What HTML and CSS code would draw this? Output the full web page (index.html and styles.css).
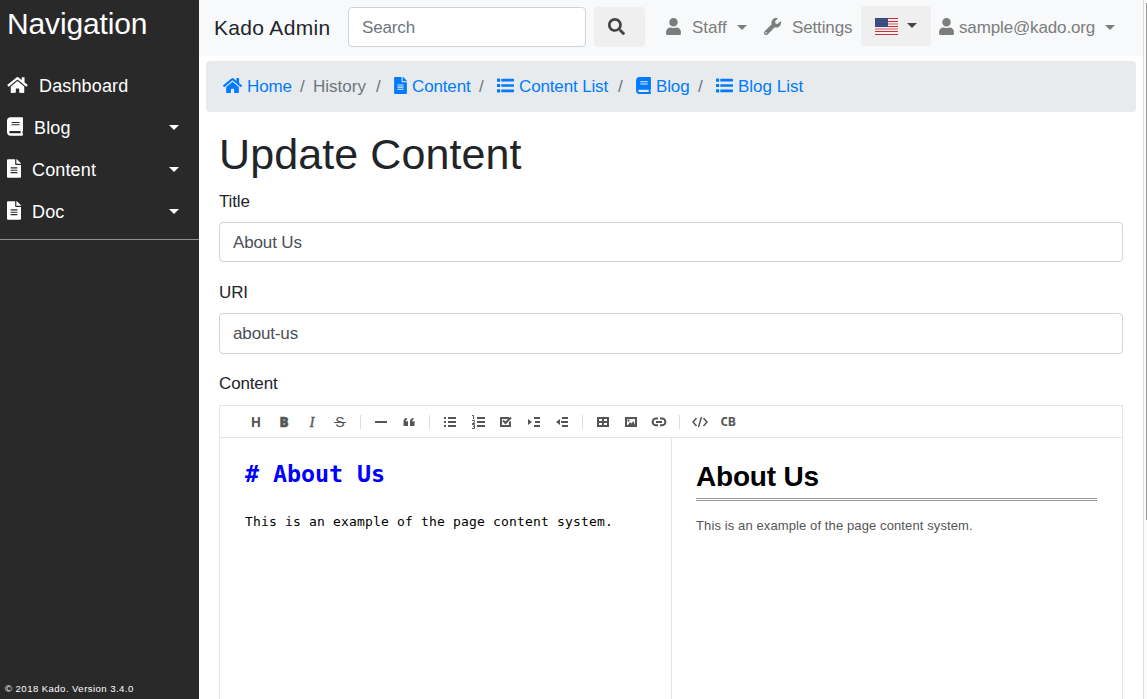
FILE: index.html
```html
<!DOCTYPE html>
<html lang="en">
<head>
<meta charset="utf-8">
<title>Kado Admin</title>
<link rel="stylesheet" href="styles.css">
</head>
<body>
<svg class="defs" width="0" height="0">
  <symbol id="home" viewBox="0 0 576 512"><path d="M280.37 148.26L96 300.11V464a16 16 0 0 0 16 16l112.06-.29a16 16 0 0 0 15.92-16V368a16 16 0 0 1 16-16h64a16 16 0 0 1 16 16v95.64a16 16 0 0 0 16 16.05L464 480a16 16 0 0 0 16-16V300L295.67 148.26a12.19 12.19 0 0 0-15.3 0zM571.6 251.47L488 182.56V44.05a12 12 0 0 0-12-12h-56a12 12 0 0 0-12 12v72.61L318.47 43a48 48 0 0 0-61 0L4.34 251.47a12 12 0 0 0-1.6 16.9l25.5 31A12 12 0 0 0 45.15 301l235.22-193.74a12.19 12.19 0 0 1 15.3 0L530.9 301a12 12 0 0 0 16.9-1.6l25.5-31a12 12 0 0 0-1.7-16.93z"/></symbol>
  <symbol id="book" viewBox="0 0 448 512"><path d="M448 360V24c0-13.3-10.7-24-24-24H96C43 0 0 43 0 96v320c0 53 43 96 96 96h328c13.3 0 24-10.7 24-24v-16c0-7.5-3.5-14.3-8.9-18.7-4.2-15.4-4.2-59.3 0-74.7 5.4-4.3 8.9-11.1 8.9-18.6zM128 134c0-3.3 2.7-6 6-6h212c3.3 0 6 2.7 6 6v20c0 3.3-2.7 6-6 6H134c-3.3 0-6-2.7-6-6v-20zm0 64c0-3.3 2.7-6 6-6h212c3.3 0 6 2.7 6 6v20c0 3.3-2.7 6-6 6H134c-3.3 0-6-2.7-6-6v-20zm253.4 250H96c-17.7 0-32-14.3-32-32 0-17.6 14.4-32 32-32h285.4c-1.9 17.1-1.9 46.9 0 64z"/></symbol>
  <symbol id="file" viewBox="0 0 384 512"><path d="M224 136V0H24C10.7 0 0 10.7 0 24v464c0 13.3 10.7 24 24 24h336c13.3 0 24-10.7 24-24V160H248c-13.2 0-24-10.8-24-24zm64 236c0 6.6-5.4 12-12 12H108c-6.6 0-12-5.4-12-12v-8c0-6.6 5.4-12 12-12h168c6.6 0 12 5.4 12 12v8zm0-64c0 6.6-5.4 12-12 12H108c-6.6 0-12-5.4-12-12v-8c0-6.6 5.4-12 12-12h168c6.6 0 12 5.4 12 12v8zm0-72v8c0 6.6-5.4 12-12 12H108c-6.6 0-12-5.4-12-12v-8c0-6.6 5.4-12 12-12h168c6.6 0 12 5.4 12 12zm96-114.1v6.1H256V0h6.1c6.4 0 12.5 2.5 17 7l97.9 98c4.5 4.5 7 10.6 7 16.9z"/></symbol>
  <symbol id="list" viewBox="0 0 512 512"><path d="M12 48h72a12 12 0 0 1 12 12v72a12 12 0 0 1-12 12H12a12 12 0 0 1-12-12V60a12 12 0 0 1 12-12zm0 160h72a12 12 0 0 1 12 12v72a12 12 0 0 1-12 12H12a12 12 0 0 1-12-12v-72a12 12 0 0 1 12-12zm0 160h72a12 12 0 0 1 12 12v72a12 12 0 0 1-12 12H12a12 12 0 0 1-12-12v-72a12 12 0 0 1 12-12zM144 56h352a16 16 0 0 1 16 16v48a16 16 0 0 1-16 16H144a16 16 0 0 1-16-16V72a16 16 0 0 1 16-16zm0 160h352a16 16 0 0 1 16 16v48a16 16 0 0 1-16 16H144a16 16 0 0 1-16-16v-48a16 16 0 0 1 16-16zm0 160h352a16 16 0 0 1 16 16v48a16 16 0 0 1-16 16H144a16 16 0 0 1-16-16v-48a16 16 0 0 1 16-16z"/></symbol>
  <symbol id="user" viewBox="0 0 448 512"><path d="M224 256c70.7 0 128-57.3 128-128S294.7 0 224 0 96 57.3 96 128s57.3 128 128 128zm89.6 32h-16.7c-22.2 10.2-46.9 16-72.9 16s-50.6-5.8-72.9-16h-16.7C60.2 288 0 348.2 0 422.4V464c0 26.5 21.5 48 48 48h352c26.5 0 48-21.5 48-48v-41.6c0-74.2-60.2-134.4-134.4-134.4z"/></symbol>
  <symbol id="search" viewBox="0 0 512 512"><path d="M505 442.7L405.3 343c-4.5-4.5-10.6-7-17-7H372c27.6-35.3 44-79.7 44-128C416 93.1 322.9 0 208 0S0 93.1 0 208s93.1 208 208 208c48.3 0 92.7-16.4 128-44v16.3c0 6.4 2.5 12.5 7 17l99.7 99.7c9.4 9.4 24.6 9.4 33.9 0l28.3-28.3c9.4-9.4 9.4-24.6.1-34zM208 336c-70.7 0-128-57.2-128-128 0-70.7 57.2-128 128-128 70.7 0 128 57.2 128 128 0 70.7-57.2 128-128 128z"/></symbol>
  <symbol id="wrench" viewBox="0 0 512 512"><path d="M507.73 109.1c-2.24-9.03-13.54-12.09-20.12-5.51l-74.36 74.36-67.88-11.31-11.31-67.88 74.36-74.36c6.62-6.62 3.43-17.9-5.66-20.16-47.38-11.74-99.55.91-136.58 37.93-39.64 39.64-50.55 97.1-34.05 147.2L18.74 402.76c-24.99 24.99-24.99 65.51 0 90.5 24.99 24.99 65.51 24.99 90.5 0l213.21-213.21c50.12 16.71 107.47 5.68 147.37-34.22 37.07-37.07 49.7-89.32 37.91-136.73zM64 472c-13.25 0-24-10.75-24-24 0-13.26 10.75-24 24-24s24 10.74 24 24c0 13.25-10.75 24-24 24z"/></symbol>
</svg>
<div class="app">
  <aside class="sidebar">
    <h2 class="side-title">Navigation</h2>
    <nav class="side-nav">
      <a class="side-link"><svg class="i20"><use href="#home"/></svg><span class="dash">Dashboard</span></a>
      <a class="side-link"><svg class="i16"><use href="#book"/></svg><span>Blog</span><i class="caret"></i></a>
      <a class="side-link"><svg class="i14"><use href="#file"/></svg><span>Content</span><i class="caret"></i></a>
      <a class="side-link"><svg class="i14"><use href="#file"/></svg><span>Doc</span><i class="caret"></i></a>
    </nav>
    <footer class="side-foot">© 2018 Kado. Version 3.4.0</footer>
  </aside>
  <main class="main">
    <header class="navbar">
      <span class="brand">Kado Admin</span>
      <input class="field search" placeholder="Search">
      <button class="search-btn"><svg class="n17"><use href="#search"/></svg></button>
      <a class="top-link staff"><svg class="n15"><use href="#user"/></svg><span>Staff</span><i class="caret"></i></a>
      <a class="top-link settings"><svg class="n17"><use href="#wrench"/></svg><span>Settings</span></a>
      <button class="lang">
        <svg class="flag" viewBox="0 0 23 17"><path fill="#f6eeee" d="M0 0h23v17H0z"/><path stroke="#c0333d" d="M0 .5h23M0 3.500h23M0 8.500h23M0 13.500h23M0 16.500h23"/><path stroke="#e3a3a8" d="M0 5.500h23M0 6.500h23M0 10.500h23M0 11.500h23"/><path fill="#31487a" d="M0 0h13v9H0z"/><path stroke="#5a6f9c" stroke-width=".7" stroke-dasharray="1 1.200" d="M1 1.500h12M2 3h11M1 4.500h12M2 6h11M1 7.500h12"/></svg>
        <i class="caret"></i>
      </button>
      <a class="top-link account"><svg class="n15"><use href="#user"/></svg><span>sample@kado.org</span><i class="caret"></i></a>
    </header>
    <nav class="crumbs">
      <a class="crumb c1"><svg class="b19"><use href="#home"/></svg>Home</a><i class="sep">/</i>
      <span class="crumb c2">History</span><i class="sep">/</i>
      <a class="crumb c3"><svg class="b13"><use href="#file"/></svg>Content</a><i class="sep">/</i>
      <a class="crumb c4"><svg class="n17"><use href="#list"/></svg>Content List</a><i class="sep">/</i>
      <a class="crumb c5"><svg class="n15"><use href="#book"/></svg>Blog</a><i class="sep">/</i>
      <a class="crumb c6"><svg class="n17"><use href="#list"/></svg>Blog List</a>
    </nav>
    <form class="form">
      <h1 class="page-title">Update Content</h1>
      <label class="label">Title</label>
      <input class="field title" value="About Us">
      <label class="label second">URI</label>
      <input class="field uri" value="about-us">
      <label class="label">Content</label>
      <div class="editor">
        <div class="tools">
          <b class="tool">H</b><b class="tool heavy">B</b><i class="tool ital">I</i><span class="tool strike">S</span>
          <i class="bar"></i>
          <svg class="tool"><path d="M8 15h12v2H8z"/></svg>
          <svg class="tool"><path d="M12 12v1.500c-1 .4-1.300 1-1.300 1.800H13V20H8.500v-4.500c0-2 1.200-3.300 3.500-3.500zM18.500 12v1.500c-1 .4-1.300 1-1.300 1.800h2.300V20H15v-4.500c0-2 1.200-3.300 3.500-3.500z"/></svg>
          <i class="bar"></i>
          <svg class="tool"><path d="M8 11h2v2H8zm4 0h8v2h-8zM8 15h2v2H8zm4 0h8v2h-8zM8 19h2v2H8zm4 0h8v2h-8z"/></svg>
          <svg class="tool"><path d="M13 11h8v2h-8zm0 4h8v2h-8zm0 4h8v2h-8z"/><path class="line" d="M8 9.500h1.500V13M8 14.500h2.500v1.300L8.500 17.500H11M8 18.500h2.500v4H8M9 20.500h1.500"/></svg>
          <svg class="tool"><path d="M8 11h9v2h-7v6h7v-3l2-1v6H8z"/><path class="thick" d="M11 14.500l2.500 2.500 5.500-5.500"/></svg>
          <svg class="tool"><path d="M8 13l4 3-4 3zM14 11h6v2h-6zm1 4h5v2h-5zm-1 4h6v2h-6z"/></svg>
          <svg class="tool"><path d="M12 13l-4 3 4 3zM14 11h6v2h-6zm-1 4h7v2h-7zm1 4h6v2h-6z"/></svg>
          <i class="bar"></i>
          <svg class="tool"><path fill-rule="evenodd" d="M8 11h12v10H8zm2 2v2h3v-2zm5 0v2h3v-2zm-5 4v2h3v-2zm5 0v2h3v-2z"/></svg>
          <svg class="tool"><path fill-rule="evenodd" d="M8 11h12v10H8zm2 2v6h8v-6z"/><path d="M11 19l2-3 1.500 1.500L16.500 15l1.500 4zM10.500 13.500h2v2h-2z"/></svg>
          <svg class="tool"><path class="thick" d="M13 12.500h-2a3.300 3.300 0 0 0 0 6.800h2M15 12.500h2a3.300 3.300 0 0 1 0 6.800h-2M11 15.900h6"/></svg>
          <i class="bar"></i>
          <svg class="tool"><path class="code" d="M10.500 12L7 16l3.500 4M17.500 12l3.500 4-3.500 4M15.500 11l-3 10"/></svg>
          <b class="tool cb">CB</b>
        </div>
        <div class="panes">
          <div class="source"><div class="md-head"># About Us</div><div class="md-text">This is an example of the page content system.</div></div>
          <div class="preview"><h1 class="pv-head">About Us</h1><p class="pv-text">This is an example of the page content system.</p></div>
        </div>
      </div>
    </form>
  </main>
  <div class="scroll"><div class="thumb"></div></div>
</div>
</body>
</html>
```
FILE: styles.css
```css
* { box-sizing: border-box; }
body { margin: 0; font: 17px/25.5px "Liberation Sans", Arial, sans-serif; letter-spacing: -.14px; color: #212529; background: #fff; overflow: hidden; }
svg { fill: currentColor; flex: none; display: block; }
.defs { position: absolute; }
input, button { font: inherit; letter-spacing: inherit; margin: 0; }
.app { display: flex; width: 1147px; height: 699px; overflow: hidden; }
.caret { flex: none; border: 5px solid transparent; border-top-color: currentColor; border-bottom: 0; }

.sidebar { width: 199px; flex: none; background: #292929; color: #fff; display: flex; flex-direction: column; }
.side-title { margin: 0; padding: 6px 0 0 7px; height: 64px; font-size: 30px; line-height: 36px; font-weight: 400; }
.side-nav { border-bottom: 1px solid #8f8f8f; height: 176px; }
.side-link { display: flex; align-items: center; gap: 11px; height: 42px; padding: 0 20px 0 7px; font-size: 18px; letter-spacing: .15px; }
.side-link span { padding-top: 3px; }
.side-link svg { margin-bottom: 1px; }
.side-link .caret { margin-left: auto; }
.i20 { width: 21px; height: 18px; }
.i16 { width: 16px; height: 19px; }
.i14 { width: 14px; height: 19px; }
.side-foot { margin-top: auto; padding: 0 0 3px 5px; font-size: 9.6px; line-height: 14px; letter-spacing: .43px; }

.main { width: 944px; flex: none; }
.navbar { display: flex; align-items: center; height: 56px; padding: 0 0 2px 15px; background: #f8f9fa; }
.brand { width: 134px; font-size: 21px; letter-spacing: .33px; padding-top: 2px; }
.field { display: block; width: 100%; height: 40px; padding: 0 13px; border: 1px solid #ced4da; border-radius: 4px; background: #fff; color: #495057; outline: 0; }
.field::placeholder { color: #6c757d; opacity: 1; }
.search { width: 238px; padding-top: 2px; }
.title { padding-top: 2px; }
.search-btn { width: 51px; height: 40px; margin-left: 8px; padding: 0 0 2px 14px; border: 0; border-radius: 4px; background: #efefef; color: #444; }
.n17 { width: 17px; height: 17px; }
.n15 { width: 15px; height: 17px; }
.top-link { display: flex; align-items: center; color: #7c7d7d; }
.top-link span { padding-top: 2px; }
.top-link svg { margin-bottom: 1px; }
.staff { margin-left: 21px; width: 98px; letter-spacing: 0; }
.staff span { margin-left: 11px; }
.staff .caret { margin-left: 10px; }
.settings { width: 97px; gap: 11px; }
.lang { display: flex; align-items: center; gap: 9px; width: 70px; height: 40px; margin-top: -2px; padding: 0 0 0 14px; border: 0; border-radius: 4px; background: #efefef; color: #444; }
.lang .caret { margin-bottom: 2px; }
.flag { width: 23px; height: 17px; margin-top: 1px; }
.account { margin-left: 8px; gap: 5px; }
.account .caret { margin-left: 5px; }

.crumbs { display: flex; align-items: center; height: 51px; margin: 5px 7px 0; padding: 1px 0 0 17px; border-radius: 4px; background: #e8ebee; color: #6c757d; }
.crumb { display: flex; align-items: center; gap: 5px; color: #007bff; white-space: nowrap; }
.crumb svg { margin-bottom: 3px; }
.b19 { width: 19px; height: 17px; }
.b13 { width: 13px; height: 17px; }
.c1 { width: 77px; }
.c2 { width: 63px; color: #6c757d; letter-spacing: 0; }
.c3 { width: 85px; }
.c4 { width: 121px; }
.c5 { width: 62px; }
.c6 { letter-spacing: 0; }
.sep { width: 13px; font-style: normal; }
.c2 + .sep { width: 18px; }
.c3 + .sep { width: 18px; }
.c4 + .sep { width: 18px; }
.c5 + .sep { width: 18px; }

.form { padding: 17px 20px 0; }
.page-title { margin: 0; font-size: 43px; line-height: 51px; font-weight: 400; letter-spacing: .1px; }
.label { display: block; margin-top: 9px; margin-bottom: 7px; }
.field + .label { margin-top: 17px; }
.field + .second { margin-top: 18px; margin-bottom: 8px; }
.uri { height: 41px; }
.editor { height: 320px; margin-top: 8px; border: 1px solid #e5e5e5; }
.tools { display: flex; height: 32px; padding-left: 22px; border-bottom: 1px solid #e5e5e5; color: #555; letter-spacing: 0; }
.tool { width: 28px; height: 31px; flex: none; text-align: center; font: 700 13.500px/32px "Open Sans", sans-serif; }
.heavy { font-weight: 800; -webkit-text-stroke: .5px currentColor; }
.ital { font: italic 400 15px/32px "Liberation Serif", serif; -webkit-text-stroke: .3px currentColor; }
.strike { font: 400 14px/32px "Liberation Sans", sans-serif; text-align: center; background: linear-gradient(currentColor, currentColor) 8px 16px / 12px 1px no-repeat; }
.cb { font: 700 13px/32px "DejaVu Sans Mono", monospace; }
.line { fill: none; stroke: currentColor; stroke-width: 1; }
.thick { fill: none; stroke: currentColor; stroke-width: 2; }
.code { fill: none; stroke: currentColor; stroke-width: 1.500; }
.bar { width: 1px; height: 14px; margin: 9px 6px 0; background: #ddd; }
.panes { display: flex; height: 288px; }
.source { width: 452px; padding: 18px 25px; border-right: 1px solid #e5e5e5; color: #000; font-family: "DejaVu Sans Mono", monospace; white-space: nowrap; }
.md-head { color: #00f; font-size: 23.400px; line-height: 36px; font-weight: 700; letter-spacing: -.09px; }
.md-text { margin-top: 20px; font-size: 13px; line-height: 20px; letter-spacing: .174px; }
.preview { flex: 1; padding: 19px 25px 0 24px; }
.pv-head { margin: 0; height: 44px; color: #000; font-size: 28px; line-height: 40px; border-bottom: 3px double #999; letter-spacing: -.2px; }
.pv-text { margin: 15px 0 0; font-size: 13px; line-height: 20px; color: #555; letter-spacing: .11px; }

.scroll { width: 4px; border-left: 1px solid #ddd; background: #fbfbfb; }
.thumb { width: 1px; height: 517px; margin: 3px 0 0 2px; background: #999; }
```
